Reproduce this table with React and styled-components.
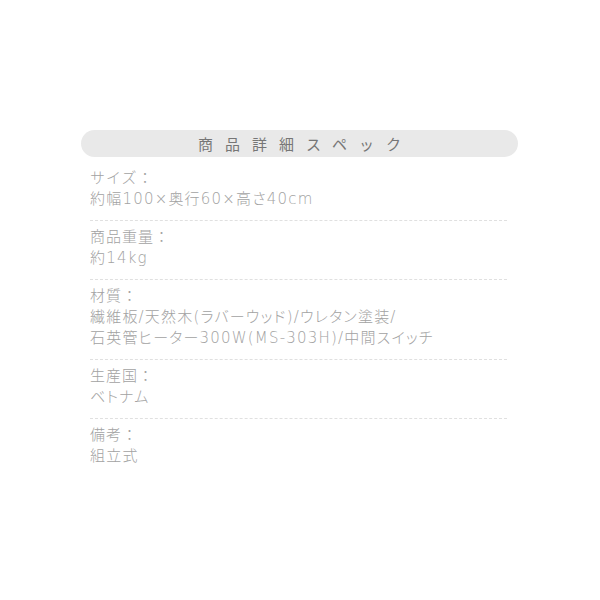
import React from "react";
import styled, { createGlobalStyle } from "styled-components";

const GlobalStyle = createGlobalStyle`
  html, body {
    margin: 0;
    padding: 0;
    background: #ffffff;
  }
  body {
    font-family: "Noto Sans CJK JP", "Noto Sans", sans-serif;
  }
`;

const Page = styled.div`
  width: 600px;
  height: 600px;
  padding-top: 130px;
  box-sizing: border-box;
`;

const Spec = styled.section`
  width: 437px;
  margin-left: 81px;
`;

const Heading = styled.h2`
  margin: 0;
  height: 27px;
  border-radius: 14px;
  background: #e9e9e9;
  color: #767676;
  font-size: 15px;
  font-weight: 400;
  line-height: 27px;
  letter-spacing: 12px;
  text-indent: 12px;
  text-align: center;
`;

const List = styled.dl`
  margin: 0;
  padding: 5px 11px 0 9px;
`;

const Item = styled.div`
  padding: 6px 0 10px;
  border-bottom: ${({ $last }) => ($last ? "none" : "1px dashed #e0e0e0")};
`;

const Label = styled.dt`
  font-family: "DejaVu Sans", "Noto Sans CJK JP", sans-serif;
  color: #a2a2a2;
  font-size: 15px;
  font-weight: 300;
  line-height: 21px;
  letter-spacing: 1px;
`;

const Value = styled.dd`
  margin: 0;
  font-family: "DejaVu Sans", "Noto Sans CJK JP", sans-serif;
  font-feature-settings: "palt";
  color: #a2a2a2;
  font-size: 15px;
  font-weight: 300;
  line-height: 21px;
  letter-spacing: 1.2px;
`;

const specs = [
  { label: "サイズ：", value: ["約幅100×奥行60×高さ40cm"] },
  { label: "商品重量：", value: ["約14kg"] },
  {
    label: "材質：",
    value: ["繊維板/天然木(ラバーウッド)/ウレタン塗装/", "石英管ヒーター300W(MS-303H)/中間スイッチ"],
  },
  { label: "生産国：", value: ["ベトナム"] },
  { label: "備考：", value: ["組立式"] },
];

export default function App() {
  return (
    <Page>
      <GlobalStyle />
      <Spec>
        <Heading>商品詳細スペック</Heading>
        <List>
          {specs.map((s, i) => (
            <Item key={s.label} $last={i === specs.length - 1}>
              <Label>{s.label}</Label>
              {s.value.map((v) => (
                <Value key={v}>{v}</Value>
              ))}
            </Item>
          ))}
        </List>
      </Spec>
    </Page>
  );
}
